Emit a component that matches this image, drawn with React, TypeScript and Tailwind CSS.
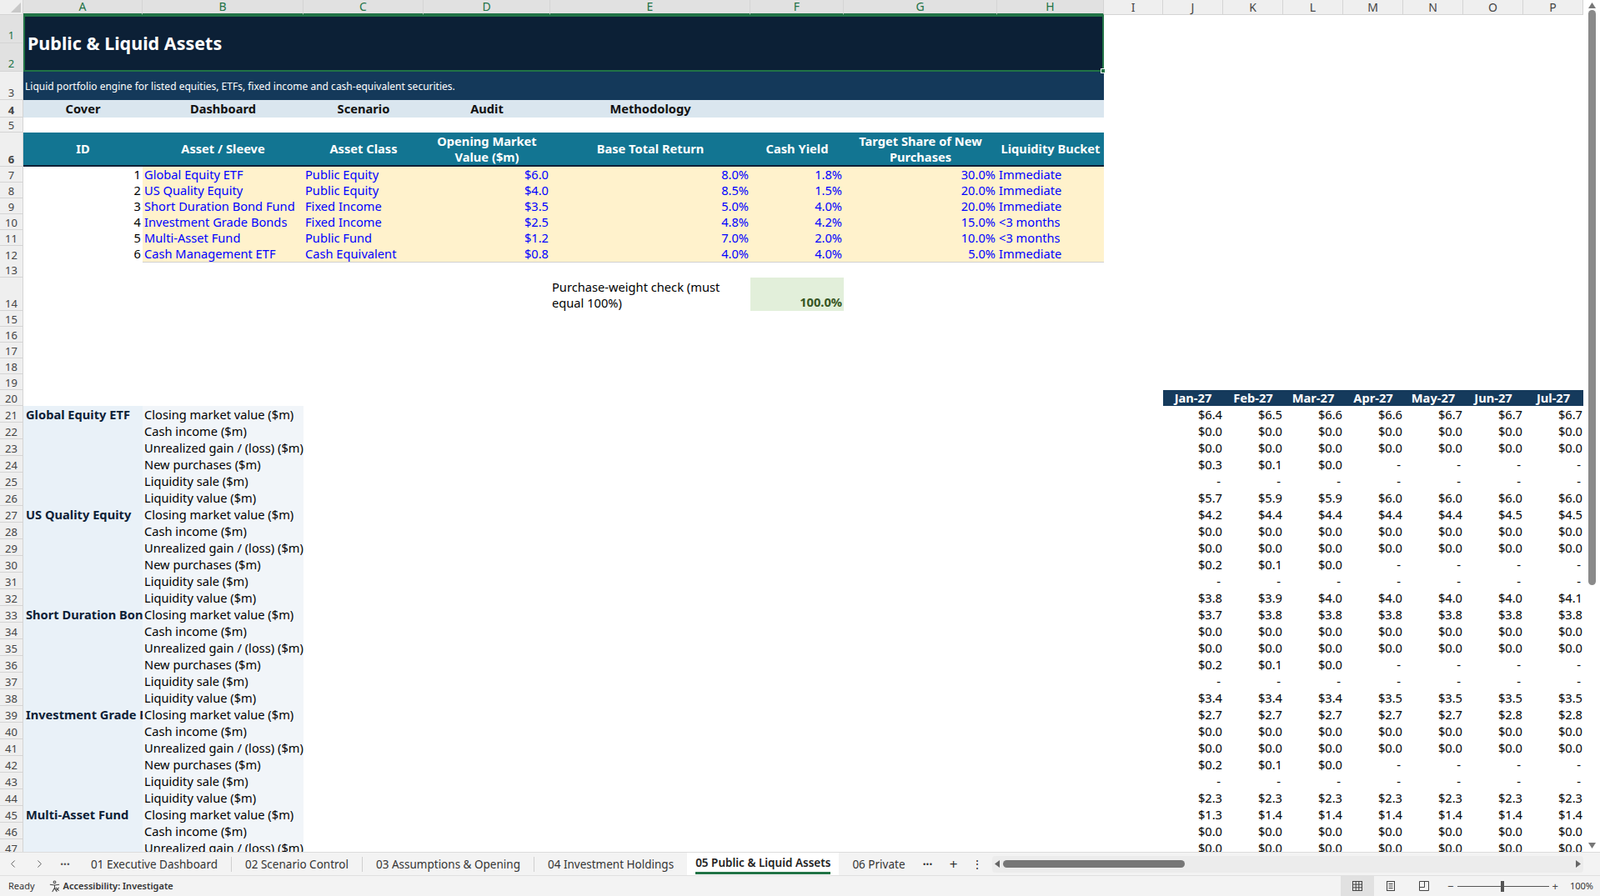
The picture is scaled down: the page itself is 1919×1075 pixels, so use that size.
import React from "react";
import { ChevronLeft, ChevronRight } from "lucide-react";

const GRID =
  "grid grid-cols-[28px_143px_193px_144px_152px_240px_112px_184px_128px_71px_72px_72px_72px_72px_72px_72px_72px]";

const letters = ["A", "B", "C", "D", "E", "F", "G", "H", "I", "J", "K", "L", "M", "N", "O", "P"];

function RH({ n, sel }: { n: React.ReactNode; sel?: boolean }) {
  return (
    <div
      className={
        "flex items-end justify-center border-r border-b border-[#d4d4d4] bg-[#efefef] pb-[1px] text-[13px] leading-none " +
        (sel ? "text-[#217346]" : "text-[#444]")
      }
    >
      {n}
    </div>
  );
}

const assets = [
  ["1", "Global Equity ETF", "Public Equity", "$6.0", "8.0%", "1.8%", "30.0%", "Immediate"],
  ["2", "US Quality Equity", "Public Equity", "$4.0", "8.5%", "1.5%", "20.0%", "Immediate"],
  ["3", "Short Duration Bond Fund", "Fixed Income", "$3.5", "5.0%", "4.0%", "20.0%", "Immediate"],
  ["4", "Investment Grade Bonds", "Fixed Income", "$2.5", "4.8%", "4.2%", "15.0%", "<3 months"],
  ["5", "Multi-Asset Fund", "Public Fund", "$1.2", "7.0%", "2.0%", "10.0%", "<3 months"],
  ["6", "Cash Management ETF", "Cash Equivalent", "$0.8", "4.0%", "4.0%", "5.0%", "Immediate"],
];

const labels = [
  "Closing market value ($m)",
  "Cash income ($m)",
  "Unrealized gain / (loss) ($m)",
  "New purchases ($m)",
  "Liquidity sale ($m)",
  "Liquidity value ($m)",
];
const Z = ["0.0", "0.0", "0.0", "0.0", "0.0", "0.0", "0.0"];
const D = ["-", "-", "-", "-", "-", "-", "-"];
const groups: [string, string[][]][] = [
  ["Global Equity ETF", [["6.4", "6.5", "6.6", "6.6", "6.7", "6.7", "6.7"], Z, Z, ["0.3", "0.1", "0.0", "-", "-", "-", "-"], D, ["5.7", "5.9", "5.9", "6.0", "6.0", "6.0", "6.0"]]],
  ["US Quality Equity", [["4.2", "4.4", "4.4", "4.4", "4.4", "4.5", "4.5"], Z, Z, ["0.2", "0.1", "0.0", "-", "-", "-", "-"], D, ["3.8", "3.9", "4.0", "4.0", "4.0", "4.0", "4.1"]]],
  ["Short Duration Bond Fund", [["3.7", "3.8", "3.8", "3.8", "3.8", "3.8", "3.8"], Z, Z, ["0.2", "0.1", "0.0", "-", "-", "-", "-"], D, ["3.4", "3.4", "3.4", "3.5", "3.5", "3.5", "3.5"]]],
  ["Investment Grade Bonds", [["2.7", "2.7", "2.7", "2.7", "2.7", "2.8", "2.8"], Z, Z, ["0.2", "0.1", "0.0", "-", "-", "-", "-"], D, ["2.3", "2.3", "2.3", "2.3", "2.3", "2.3", "2.3"]]],
  ["Multi-Asset Fund", [["1.3", "1.4", "1.4", "1.4", "1.4", "1.4", "1.4"], Z, Z]],
];

export default function App() {
  const dataRows: React.ReactNode[] = [];
  let r = 21;
  groups.forEach(([name, rows]) => {
    rows.forEach((vals, i) => {
      dataRows.push(
        <div key={r} className={GRID + " h-[20px]"}>
          <RH n={r} />
          <div className="overflow-hidden whitespace-nowrap bg-[#e9f1f8] pl-[3px] font-bold text-[#0c2036]">{i === 0 ? name : ""}</div>
          <div className="overflow-hidden whitespace-nowrap bg-[#f1f5f9] pl-[2px]">{labels[i]}</div>
          <div className="col-span-7" />
          {vals.map((v, j) => (
            <div key={j} className={"text-right " + (v === "-" ? "pr-[3px]" : "pr-[1px]")}>
              {v === "-" ? "-" : "$" + v}
            </div>
          ))}
        </div>
      );
      r++;
    });
  });

  return (
    <div className="flex h-[1075px] w-[1919px] flex-col overflow-hidden bg-white font-['Liberation_Sans'] text-[14.67px] leading-[20px] text-black">
      <div className="flex h-[1022px] overflow-hidden">
        <div className="w-[1899px] shrink-0 overflow-hidden">
          {/* column headers */}
          <div className={GRID + " h-[18px]"}>
            <div className="relative border-r border-b border-[#d4d4d4] bg-[#efefef]">
              <svg className="absolute right-[2px] bottom-[2px]" width="12" height="12"><polygon points="12,0 12,12 0,12" fill="#c8c8c8" /></svg>
            </div>
            {letters.map((l, i) => (
              <div
                key={l}
                className={
                  "flex items-center justify-center overflow-visible border-r text-[14px] leading-none " +
                  (i < 8 ? "border-b-2 border-b-[#217346] border-r-[#d4d4d4] bg-[#e1e1e1] text-[#217346]" : "border-b border-[#d4d4d4] bg-[#efefef] text-[#444]")
                }
              >
                {l}
              </div>
            ))}
          </div>

          {/* rows 1-2 title */}
          <div className="flex h-[68px]">
            <div className="flex w-[28px] flex-col">
              <div className="flex h-[34px] items-end justify-center border-r border-b border-[#d4d4d4] bg-[#e1e1e1] pb-[2px] text-[13px] leading-none text-[#217346]">1</div>
              <div className="flex h-[34px] items-end justify-center border-r border-b border-[#d4d4d4] bg-[#e1e1e1] pb-[2px] text-[13px] leading-none text-[#217346]">2</div>
            </div>
            <div className="relative flex w-[1296px] items-center border-2 border-[#217346] bg-[#0c2036] pl-[3px]">
              <span className="text-[21.5px] font-bold text-white">Public &amp; Liquid Assets</span>
              <div className="absolute -right-[4px] -bottom-[4px] h-[6px] w-[6px] border border-white bg-[#217346]" />
            </div>
          </div>

          {/* row 3 */}
          <div className={GRID + " h-[34px]"}>
            <RH n={3} />
            <div className="col-span-8 flex items-center bg-[#14395a] pl-[2px] pt-[2px] text-[12px] text-white">
              Liquid portfolio engine for listed equities, ETFs, fixed income and cash-equivalent securities.
            </div>
          </div>

          {/* row 4 */}
          <div className={GRID + " h-[21px] font-bold text-[#111]"}>
            <RH n={4} />
            <div className="bg-[#dae6ef] text-center">Cover</div>
            <div className="bg-[#dae6ef] text-center">Dashboard</div>
            <div className="bg-[#dae6ef] text-center">Scenario</div>
            <div className="bg-[#dae6ef] text-center">Audit</div>
            <div className="bg-[#dae6ef] text-center">Methodology</div>
            <div className="col-span-3 bg-[#dae6ef]" />
          </div>

          {/* row 5 */}
          <div className={GRID + " h-[18px]"}>
            <RH n={5} />
          </div>

          {/* row 6 header */}
          <div className={GRID + " h-[41px] font-bold leading-[19px] text-white"}>
            <RH n={6} />
            {["ID", "Asset / Sleeve", "Asset Class", "Opening Market Value ($m)", "Base Total Return", "Cash Yield", "Target Share of New Purchases", "Liquidity Bucket"].map((h) => (
              <div key={h} className="flex items-center justify-center border-b-2 border-[#0c2036] bg-[#127592] px-[2px] text-center">
                {h}
              </div>
            ))}
          </div>

          {/* rows 7-12 */}
          {assets.map((a, i) => {
            const b = i === 5 ? " border-b border-[#d0d0d0]" : "";
            return (
              <div key={i} className={GRID + " h-[19px] leading-[19px]"}>
                <RH n={7 + i} />
                <div className="pr-[2px] text-right">{a[0]}</div>
                <div className={"whitespace-nowrap bg-[#fff2cc] pl-[2px] text-[#0000ff]" + b}>{a[1]}</div>
                <div className={"bg-[#fff2cc] pl-[2px] text-[#0000ff]" + b}>{a[2]}</div>
                <div className={"bg-[#fff2cc] pr-[2px] text-right text-[#0000ff]" + b}>{a[3]}</div>
                <div className={"bg-[#fff2cc] pr-[2px] text-right text-[#0000ff]" + b}>{a[4]}</div>
                <div className={"bg-[#fff2cc] pr-[2px] text-right text-[#0000ff]" + b}>{a[5]}</div>
                <div className={"bg-[#fff2cc] pr-[2px] text-right text-[#0000ff]" + b}>{a[6]}</div>
                <div className={"bg-[#fff2cc] pl-[2px] text-[#0000ff]" + b}>{a[7]}</div>
              </div>
            );
          })}

          {/* row 13 */}
          <div className={GRID + " h-[19px]"}>
            <RH n={13} />
          </div>

          {/* row 14 */}
          <div className={GRID + " h-[40px] leading-[19px]"}>
            <RH n={14} />
            <div className="col-span-4" />
            <div className="flex items-center pl-[2px] pt-[1px]">Purchase-weight check (must equal 100%)</div>
            <div className="flex items-end justify-end bg-[#e2efda] pr-[2px] pb-[1px] font-bold text-[#375623]">100.0%</div>
          </div>

          {[15, 16, 17, 18, 19].map((n) => (
            <div key={n} className={GRID + " h-[19px]"}>
              <RH n={n} />
            </div>
          ))}

          {/* row 20 months */}
          <div className={GRID + " h-[19px] leading-[19px]"}>
            <RH n={20} />
            <div className="col-span-9" />
            {["Jan-27", "Feb-27", "Mar-27", "Apr-27", "May-27", "Jun-27", "Jul-27"].map((m) => (
              <div key={m} className="bg-[#153a5c] text-center font-bold text-white">
                {m}
              </div>
            ))}
          </div>

          {dataRows}
        </div>

        {/* vertical scrollbar */}
        <div className="flex w-[20px] flex-col items-center bg-white">
          <svg className="mt-[3px]" width="9" height="7"><polygon points="4.5,0 9,7 0,7" fill="#777" /></svg>
          <div className="mt-[2px] h-[690px] w-[9px] rounded-full bg-[#8a8a8a]" />
          <div className="flex-1" />
          <svg className="mb-[4px]" width="9" height="7"><polygon points="0,0 9,0 4.5,7" fill="#777" /></svg>
        </div>
      </div>

      {/* tab bar */}
      <div className="flex h-[28px] items-center border-t border-[#dcdcdc] bg-[#f3f3f3] font-['Open_Sans'] text-[13.5px] text-[#333]">
        <div className="flex w-[31px] justify-center text-[#555]"><ChevronLeft size={15} strokeWidth={1.5} /></div>
        <div className="flex w-[32px] justify-center text-[#555]"><ChevronRight size={15} strokeWidth={1.5} /></div>
        <div className="flex w-[30px] justify-center font-bold text-[#555]">···</div>
        <div className="px-[16px]">01 Executive Dashboard</div>
        <div className="h-[18px] w-px bg-[#cfcfcf]" />
        <div className="px-[16px]">02 Scenario Control</div>
        <div className="h-[18px] w-px bg-[#cfcfcf]" />
        <div className="px-[16px]">03 Assumptions &amp; Opening</div>
        <div className="h-[18px] w-px bg-[#cfcfcf]" />
        <div className="px-[16px]">04 Investment Holdings</div>
        <div className="flex h-[28px] flex-col justify-center bg-white px-[10px]">
          <div className="font-semibold text-[#222]">05 Public &amp; Liquid Assets</div>
          <div className="mt-[1px] h-[3px] w-full bg-[#217346]" />
        </div>
        <div className="px-[16px]">06 Private</div>
        <div className="w-[22px] text-center font-bold">···</div>
        <div className="w-[40px] text-center text-[17px]">+</div>
        <div className="w-[16px] text-center">⋮</div>
        <div className="ml-[10px] flex h-[20px] flex-1 items-center rounded bg-[#ececec] px-[3px]">
          <svg width="6" height="9"><polygon points="6,0 6,9 0,4.5" fill="#666" /></svg>
          <div className="ml-[4px] h-[9px] w-[218px] rounded-full bg-[#777]" />
          <div className="flex-1" />
          <svg width="6" height="9"><polygon points="0,0 6,4.5 0,9" fill="#666" /></svg>
        </div>
        <div className="w-[20px]" />
      </div>

      {/* status bar */}
      <div className="flex h-[25px] items-center border-t border-[#e0e0e0] bg-[#f3f3f3] font-['Open_Sans'] text-[11px] text-[#333]">
        <div className="pl-[10px]">Ready</div>
        <div className="ml-[16px] flex items-center gap-[3px] font-semibold">
          <svg width="15" height="15" viewBox="0 0 16 16" fill="none" stroke="#444" strokeWidth="1.1">
            <circle cx="8" cy="2.5" r="1.5" />
            <path d="M2 5.5 L8 6.5 L14 5.5 M8 6.5 V10 M8 10 L5 15 M8 10 L11 15" />
            <path d="M9.5 9.5 L13.5 13.5 M13.5 9.5 L9.5 13.5" />
          </svg>
          Accessibility: Investigate
        </div>
        <div className="flex-1" />
        <div className="flex h-[25px] w-[40px] items-center justify-center bg-[#e1e1e1]">
          <svg width="14" height="14" viewBox="0 0 14 14" fill="none" stroke="#444" strokeWidth="1"><rect x="1.5" y="1.5" width="11" height="11" /><path d="M1.5 5.2H12.5M1.5 8.8H12.5M5.2 1.5V12.5M8.8 1.5V12.5" /></svg>
        </div>
        <div className="flex w-[40px] justify-center">
          <svg width="14" height="14" viewBox="0 0 14 14" fill="none" stroke="#444" strokeWidth="1"><rect x="2.5" y="1.5" width="9" height="11" /><path d="M4.5 4.5H9.5M4.5 7H9.5M4.5 9.5H9.5" /></svg>
        </div>
        <div className="flex w-[40px] justify-center">
          <svg width="14" height="14" viewBox="0 0 14 14" fill="none" stroke="#444" strokeWidth="1"><path d="M1.5 1.5H12.5V12.5H1.5Z M7.5 1.5V8.5H1.5" /></svg>
        </div>
        <div className="ml-[8px] flex items-center text-[#444]">
          <span className="text-[13px]">−</span>
          <div className="relative mx-[4px] h-px w-[110px] bg-[#555]">
            <div className="absolute left-[52px] -top-[6px] h-[13px] w-[4px] bg-[#555]" />
          </div>
          <span className="text-[13px]">+</span>
        </div>
        <div className="ml-[14px] pr-[8px] text-[11px]">100%</div>
      </div>
    </div>
  );
}
